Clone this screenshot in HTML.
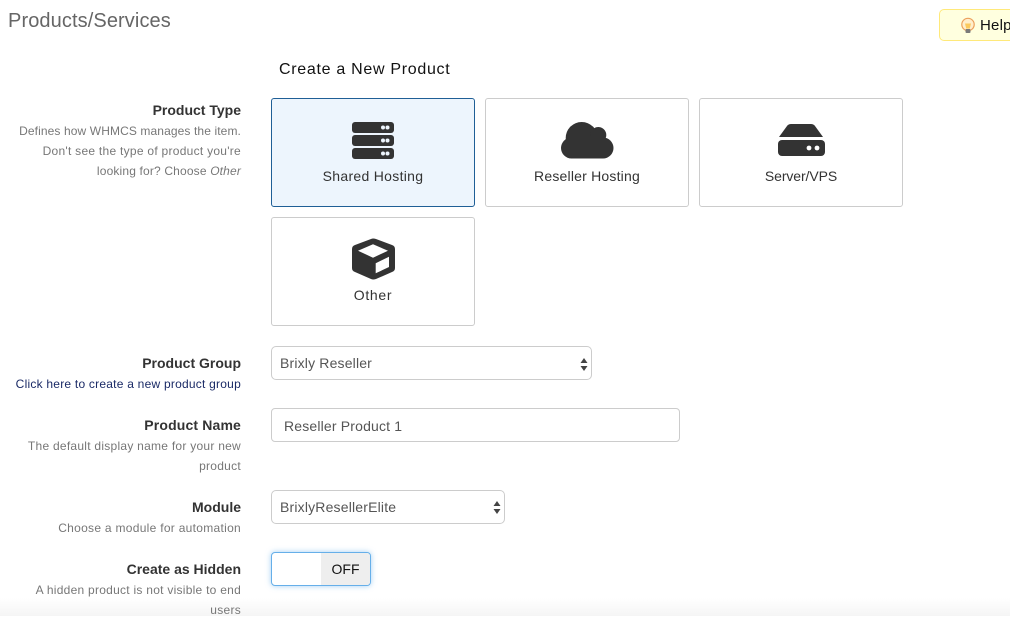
<!DOCTYPE html>
<html><head><meta charset="utf-8">
<style>
html,body{margin:0;padding:0;background:#fff}
body{width:1010px;height:616px;overflow:hidden;position:relative;font-family:"Liberation Sans",sans-serif}
.t{position:absolute;white-space:nowrap}
.r{position:absolute;right:769px;white-space:nowrap;text-align:right}
.b{font-weight:bold;font-size:14px;color:#333;line-height:20px}
.s{font-size:12px;color:#777;line-height:20px;letter-spacing:.27px}
.box{position:absolute;box-sizing:border-box;width:204px;height:109px;border:1px solid #ccc;border-radius:3px;background:#fff}
.lab{position:absolute;left:0;right:0;text-align:center;font-size:14px;color:#333;line-height:20px;letter-spacing:.25px}
.f{position:absolute;box-sizing:border-box;border:1px solid #ccc;border-radius:5px;background:#fff;font-size:14px;color:#555;line-height:32px;letter-spacing:.17px}
svg{position:absolute;overflow:visible}
</style></head><body>
<div style="position:absolute;left:0;right:0;top:598px;height:18px;background:linear-gradient(rgba(245,245,245,0),#f5f5f5)"></div>
<div class="t" style="left:8px;top:9px;font-size:20px;line-height:24px;color:#666;letter-spacing:.1px">Products/Services</div>
<div class="t" style="left:279px;top:59px;font-size:16px;line-height:22px;color:#111;letter-spacing:.7px">Create a New Product</div>

<div style="position:absolute;left:939px;top:9px;width:90px;height:32px;box-sizing:border-box;border:1px solid #ffe97a;border-radius:5px;background:#ffffdf"></div>
<svg style="left:960px;top:18px" width="16" height="16" viewBox="0 0 16 16"><circle cx="8" cy="6.500" r="6.200" fill="#ffeecb" stroke="#ec9f5a" stroke-width="1.200"/><path d="M5 5.500h6l-1.200 5H6.200z" fill="#fbc95d"/><rect x="5.500" y="11" width="5" height="4" rx="1" fill="#7a7a7a"/></svg>
<div class="t" style="left:980px;top:16px;font-size:15px;line-height:20px;color:#111;letter-spacing:.2px">Help</div>

<div class="r b" style="top:100px">Product Type</div>
<div class="r s" style="top:121px;letter-spacing:.11px">Defines how WHMCS manages the item.</div>
<div class="r s" style="top:141px">Don't see the type of product you're</div>
<div class="r s" style="top:161px;letter-spacing:.16px">looking for? Choose <i>Other</i></div>

<div class="box" style="left:271px;top:98px;background:#edf5fd;border-color:#1f5f96"><div class="lab" style="top:67px;letter-spacing:.3px">Shared Hosting</div></div>
<div class="box" style="left:485px;top:98px"><div class="lab" style="top:67px;letter-spacing:.2px">Reseller Hosting</div></div>
<div class="box" style="left:699px;top:98px"><div class="lab" style="top:67px;letter-spacing:-.1px">Server/VPS</div></div>
<div class="box" style="left:271px;top:217px"><div class="lab" style="top:67px;letter-spacing:.7px">Other</div></div>

<svg style="left:352px;top:122px" width="42" height="37" viewBox="0 0 42 37">
<g fill="#333"><rect y="0" width="42" height="11" rx="3"/><rect y="13" width="42" height="11" rx="3"/><rect y="26" width="42" height="11" rx="3"/></g>
<g fill="#edf5fd"><circle cx="31" cy="5.500" r="2"/><circle cx="35.500" cy="5.500" r="2"/><circle cx="31" cy="18.500" r="2"/><circle cx="35.500" cy="18.500" r="2"/><circle cx="31" cy="31.500" r="2"/><circle cx="35.500" cy="31.500" r="2"/></g></svg>

<svg style="left:561px;top:122px" width="53" height="37" viewBox="0 0 53 37"><g fill="#333"><circle cx="20.700" cy="16" r="16"/><circle cx="37.300" cy="13" r="8"/><circle cx="10.500" cy="26" r="10.500"/><circle cx="42" cy="26" r="10.500"/><rect x="10.500" y="15" width="31.500" height="21.500"/></g></svg>

<svg style="left:778px;top:124px" width="47" height="32" viewBox="0 0 47 32">
<path fill="#333" d="M1 13L9 2Q10.500 0 13 0H33Q35.500 0 37 2L45 13z"/>
<rect x="0" y="16" width="47" height="16" rx="4" fill="#333"/>
<circle cx="31" cy="24" r="2.400" fill="#fff"/><circle cx="39" cy="24" r="2.400" fill="#fff"/></svg>

<svg style="left:352px;top:238px" width="43" height="42" viewBox="0 0 43 42">
<path fill="#333" d="M19 1Q21 0 24 1L40 7Q43 8 43 11V30Q43 33 40 34L24 41Q21 42 19 41L3 34Q0 33 0 30V11Q0 8 3 7z"/>
<path fill="#fff" d="M21 6.300L36 12.700L21 19.700L6 12.700z"/>
<path fill="#fff" d="M23.700 25.300L37 18.700V29L23.700 35.300z"/></svg>

<div class="r b" style="top:353px">Product Group</div>
<div class="r s" style="top:374px;color:#1a2a66;letter-spacing:.23px">Click here to create a new product group</div>
<div class="f" style="left:271px;top:346px;width:321px;height:34px;padding-left:8px">Brixly Reseller</div>
<svg style="left:580px;top:358px" width="8" height="13" viewBox="0 0 8 13" fill="#444"><path d="M4 0L7.500 5H.5zM4 13L.5 8H7.500z"/></svg>

<div class="r b" style="top:415px;letter-spacing:.15px">Product Name</div>
<div class="r s" style="top:436px;letter-spacing:.26px">The default display name for your new</div>
<div class="r s" style="top:456px">product</div>
<div class="f" style="left:271px;top:408px;width:409px;height:34px;padding-left:12px;border-radius:4px;line-height:34px">Reseller Product 1</div>

<div class="r b" style="top:497px">Module</div>
<div class="r s" style="top:518px;letter-spacing:.29px">Choose a module for automation</div>
<div class="f" style="left:271px;top:490px;width:234px;height:34px;padding-left:8px;letter-spacing:.18px">BrixlyResellerElite</div>
<svg style="left:493px;top:501px" width="8" height="13" viewBox="0 0 8 13" fill="#444"><path d="M4 0L7.500 5H.5zM4 13L.5 8H7.500z"/></svg>

<div class="r b" style="top:559px">Create as Hidden</div>
<div class="r s" style="top:580px;letter-spacing:.26px">A hidden product is not visible to end</div>
<div class="r s" style="top:600px">users</div>
<div style="position:absolute;left:271px;top:552px;width:100px;height:34px;box-sizing:border-box;border:1px solid #66afe9;border-radius:4px;background:#fff;box-shadow:0 0 6px rgba(102,175,233,.6);overflow:hidden">
<div style="position:absolute;left:49px;top:0;width:49px;height:32px;background:#eee;color:#111;font-size:14px;line-height:32px;text-align:center;letter-spacing:0">OFF</div></div>
</body></html>
